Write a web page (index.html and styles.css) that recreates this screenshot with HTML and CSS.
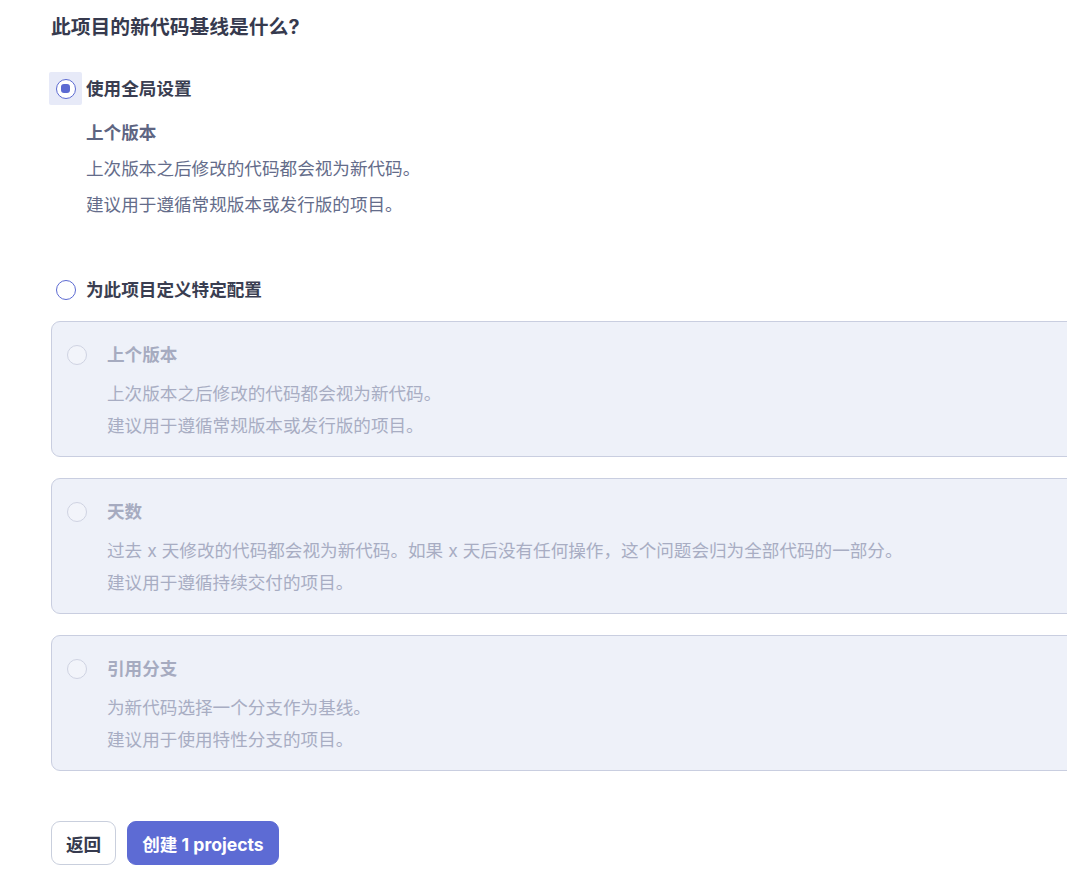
FILE: index.html
```html
<!DOCTYPE html>
<html lang="zh">
<head>
<meta charset="utf-8">
<title>新代码基线</title>
<link rel="stylesheet" href="styles.css">
</head>
<body>
<div class="page">
  <h2 class="heading">此项目的新代码基线是什么?</h2>

  <div class="option-row">
    <span class="radio-wrap focused"><span class="radio checked"><span class="dot"></span></span></span>
    <span class="option-label">使用全局设置</span>
  </div>
  <div class="global-info">
    <div class="info-title">上个版本</div>
    <div class="info-line">上次版本之后修改的代码都会视为新代码。</div>
    <div class="info-line">建议用于遵循常规版本或发行版的项目。</div>
  </div>

  <div class="option-row second">
    <span class="radio-wrap"><span class="radio"></span></span>
    <span class="option-label">为此项目定义特定配置</span>
  </div>

  <div class="cards">
    <div class="card">
      <span class="radio disabled"></span>
      <div class="card-body">
        <div class="card-title">上个版本</div>
        <div class="card-line">上次版本之后修改的代码都会视为新代码。</div>
        <div class="card-line">建议用于遵循常规版本或发行版的项目。</div>
      </div>
    </div>
    <div class="card">
      <span class="radio disabled"></span>
      <div class="card-body">
        <div class="card-title">天数</div>
        <div class="card-line">过去 x 天修改的代码都会视为新代码。如果 x 天后没有任何操作，这个问题会归为全部代码的一部分。</div>
        <div class="card-line">建议用于遵循持续交付的项目。</div>
      </div>
    </div>
    <div class="card">
      <span class="radio disabled"></span>
      <div class="card-body">
        <div class="card-title">引用分支</div>
        <div class="card-line">为新代码选择一个分支作为基线。</div>
        <div class="card-line">建议用于使用特性分支的项目。</div>
      </div>
    </div>
  </div>

  <div class="actions">
    <button class="btn btn-secondary">返回</button>
    <button class="btn btn-primary">创建 1 projects</button>
  </div>
</div>
</body>
</html>
```

FILE: styles.css
```css
html, body {
  margin: 0;
  padding: 0;
  background: #ffffff;
  overflow: hidden;
}

body {
  font-family: Inter, "Noto Sans CJK SC", sans-serif;
  color: #3b3f52;
}

.page {
  width: 1100px;
  padding-left: 51px;
  padding-top: 13px;
}

.heading {
  margin: 0;
  font-size: 19.8px;
  line-height: 28px;
  font-weight: 700;
  color: #363a4e;
}

.option-row {
  display: flex;
  align-items: center;
  height: 33px;
  margin-top: 31px;
  margin-left: -2px;
}

.option-row.second {
  margin-top: 50px;
}

.radio-wrap {
  width: 33px;
  height: 33px;
  display: flex;
  align-items: center;
  justify-content: center;
  border-radius: 2px;
  margin-right: 4px;
}

.radio-wrap.focused {
  background: #e7eaf8;
}

.radio {
  box-sizing: border-box;
  width: 20px;
  height: 20px;
  border-radius: 50%;
  border: 1.5px solid #5c6ad2;
  background: #ffffff;
  display: flex;
  align-items: center;
  justify-content: center;
  flex: none;
}

.radio .dot {
  width: 9px;
  height: 9px;
  border-radius: 3px;
  background: #5c6ad2;
}

.radio.disabled {
  border: 1px solid #cfd3e2;
  background: #f2f4fa;
}

.option-label {
  font-size: 17.6px;
  font-weight: 700;
  color: #3a3e51;
  line-height: 33px;
}

.global-info {
  margin-left: 35px;
  margin-top: 10px;
}

.info-title {
  font-size: 17.6px;
  font-weight: 700;
  line-height: 36px;
  color: #5e6582;
}

.info-line {
  font-size: 17.6px;
  line-height: 36px;
  color: #646c8a;
}

.cards {
  margin-top: 15px;
  display: flex;
  flex-direction: column;
  gap: 21px;
}

.card {
  display: flex;
  align-items: flex-start;
  gap: 20px;
  box-sizing: border-box;
  height: 136px;
  padding: 17px 15px 14px 15px;
  background: #eef1f9;
  border: 1px solid #c9cee0;
  border-radius: 9px;
}

.card .radio {
  margin-top: 6px;
}

.card-title {
  font-size: 17.6px;
  font-weight: 700;
  line-height: 32px;
  color: #a6abc0;
  margin-bottom: 7px;
}

.card-line {
  font-size: 17.6px;
  line-height: 32px;
  color: #a8adc3;
}

.actions {
  display: flex;
  gap: 11px;
  margin-top: 50px;
}

.btn {
  box-sizing: border-box;
  height: 44px;
  border-radius: 9px;
  font-family: Inter, "Noto Sans CJK SC", sans-serif;
  font-size: 17.6px;
  font-weight: 700;
  padding: 0 14px;
  cursor: pointer;
}

.btn-secondary {
  background: #ffffff;
  border: 1px solid #c9cfdd;
  color: #363a4e;
}

.btn-primary {
  background: #5d6bd4;
  border: 1px solid #5d6bd4;
  color: #ffffff;
}
```
